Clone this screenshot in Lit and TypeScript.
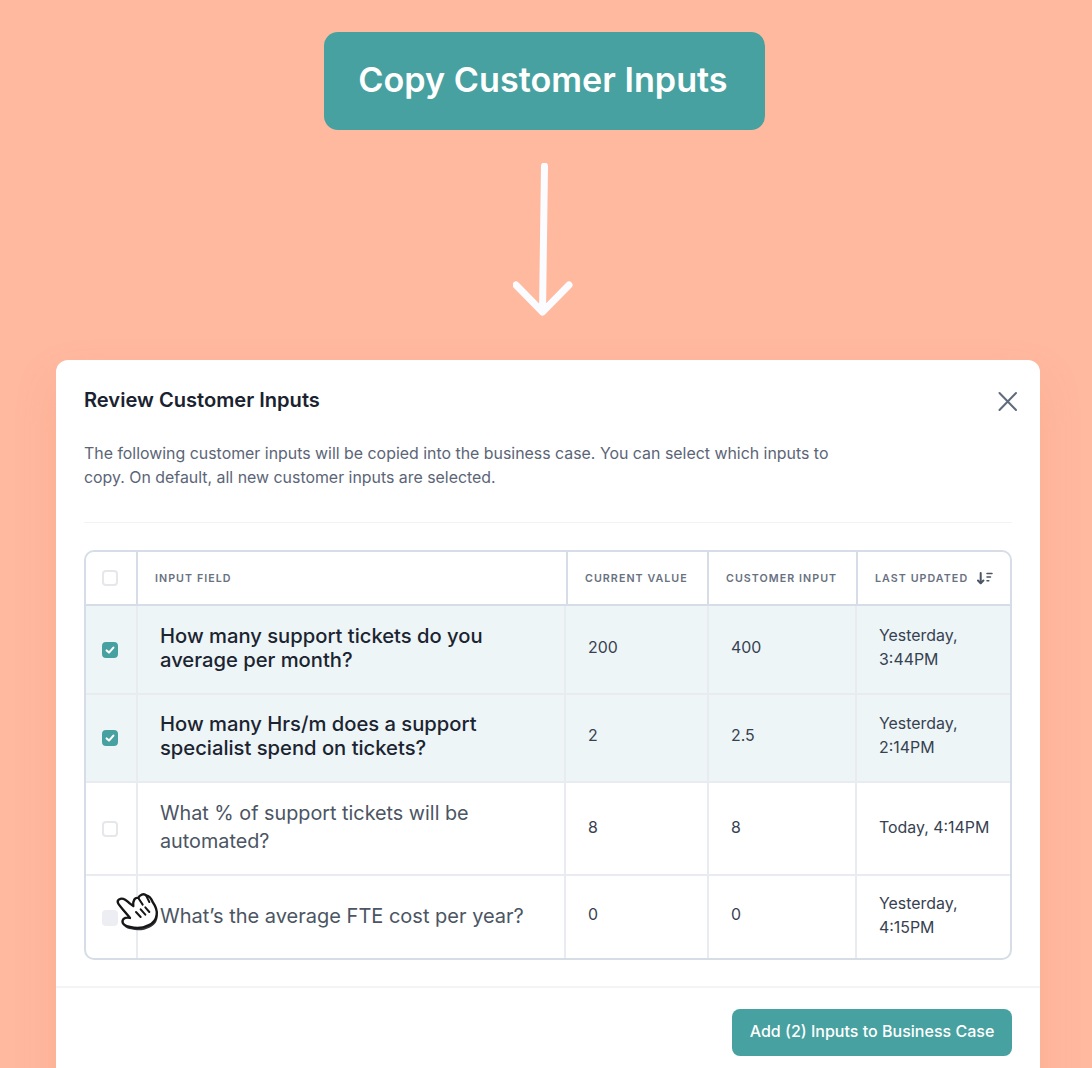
import { LitElement, html, css, svg } from 'lit';
import { customElement } from 'lit/decorators.js';
import { classMap } from 'lit/directives/class-map.js';

interface InputRow {
  question: string;
  current: string;
  customer: string;
  updated: string;
  selected?: boolean;
  tall?: boolean;
  hovered?: boolean;
}

const ROWS: InputRow[] = [
  { question: 'How many support tickets do you average per month?', current: '200', customer: '400', updated: 'Yesterday, 3:44PM', selected: true },
  { question: 'How many Hrs/m does a support specialist spend on tickets?', current: '2', customer: '2.5', updated: 'Yesterday, 2:14PM', selected: true },
  { question: 'What % of support tickets will be automated?', current: '8', customer: '8', updated: 'Today, 4:14PM', tall: true },
  { question: 'What’s the average FTE cost per year?', current: '0', customer: '0', updated: 'Yesterday, 4:15PM', hovered: true },
];

const HAND_OUTLINE =
  'M118 92C125 87 135 90 150 105L160 112C158 95 165 85 175 88C178 78 192 73 198 80C208 82 215 92 218 100C225 110 232 125 230 138C228 155 218 165 205 170C190 178 170 180 150 175C135 172 125 165 128 155C130 148 140 145 150 148C140 135 125 120 115 105C112 100 113 95 118 92Z';

const handCursor = svg`
  <svg class="hand" width="45" height="40" viewBox="105 70 135 120" fill="none">
    <path d=${HAND_OUTLINE} fill="#33363b" transform="translate(3 7)" />
    <path d=${HAND_OUTLINE} fill="#fff" stroke="#161616" stroke-width="7" stroke-linejoin="round" />
    <path d="M175 88L188 108M198 80L208 100M168 130L182 145M182 122L196 138M196 116L208 130"
      stroke="#161616" stroke-width="6" stroke-linecap="round" />
  </svg>
`;

@customElement('app-root')
export class AppRoot extends LitElement {
  static styles = css`
    :host {
      display: block;
      height: 1068px;
      overflow: hidden;
      background: #ffb99f;
      font-family: Inter, 'Liberation Sans', sans-serif;
      color: #111827;
    }

    .top {
      display: flex;
      flex-direction: column;
      align-items: center;
      padding: 32px 3px 0 0;
    }

    .copy-btn {
      width: 441px;
      height: 98px;
      box-sizing: border-box;
      display: flex;
      align-items: center;
      justify-content: center;
      padding: 0 3px 4px 0;
      background: #47a1a0;
      color: #fff;
      border-radius: 14px;
      font-size: 34.2px;
      font-weight: 600;
    }

    .arrow {
      display: block;
      margin: 33px 0 42px;
    }

    .modal {
      margin: 0 52px 0 56px;
      height: 760px;
      background: #fff;
      border-radius: 12px;
      box-shadow: 0 20px 40px rgba(230, 130, 100, 0.22);
      box-sizing: border-box;
      padding-top: 28px;
    }

    .modal-head {
      display: flex;
      justify-content: space-between;
      padding: 0 23px 0 28px;
    }

    h2 {
      margin: 0;
      font-size: 20.1px;
      line-height: 25px;
      font-weight: 600;
      color: #1a2230;
    }

    .close {
      display: block;
      margin-top: 3px;
    }

    .desc {
      margin: 29px 0 0 28px;
      width: 760px;
      font-size: 15.9px;
      line-height: 24px;
      color: #5b6577;
    }

    .rule {
      height: 1px;
      margin: 32px 28px 27px;
      background: #f1f3f7;
    }

    .table {
      margin: 0 28px;
      border: 2px solid #d6dde6;
      border-radius: 10px;
      overflow: hidden;
      height: 410px;
      box-sizing: border-box;
      position: relative;
    }

    .head,
    .row {
      display: grid;
      box-sizing: border-box;
    }

    .head {
      grid-template-columns: 50px 430px 141px 149px 1fr;
      height: 54px;
      border-bottom: 2px solid #d6dde6;
      font-size: 10.7px;
      font-weight: 600;
      letter-spacing: 1.05px;
      color: #68717f;
    }

    .head > div {
      display: flex;
      align-items: center;
      padding-left: 17px;
      border-left: 2px solid #d6dde6;
    }

    .head > div:first-child {
      border-left: 0;
      padding: 0 2px 0 0;
      justify-content: center;
    }

    .sort {
      margin-left: 9px;
    }

    .row {
      grid-template-columns: 50px 428px 143px 148px 1fr;
      height: 88px;
      border-bottom: 2px solid #e8ecf1;
      color: #374151;
    }

    .head + .row {
      height: 89px;
    }

    .row:last-child {
      border-bottom: 0;
    }

    .row.tall {
      height: 93px;
    }

    .row.hovered {
      height: 84px;
    }

    .row.selected {
      background: #edf5f7;
      color: #1b2430;
    }

    .row > div {
      display: flex;
      align-items: center;
      border-left: 2px solid #e8ecf1;
      box-sizing: border-box;
      font-size: 15.9px;
      line-height: 24px;
      padding-left: 22px;
      padding-bottom: 4px;
    }

    .row.tall > div {
      padding-bottom: 2px;
    }

    .row.hovered > div {
      padding-bottom: 5px;
    }

    .row > .check-cell,
    .row.tall > .check-cell,
    .row.hovered > .check-cell {
      border-left: 0;
      padding: 0 2px 0 0;
      justify-content: center;
      position: relative;
    }

    .row > .question {
      font-size: 19.8px;
      line-height: 24px;
      padding-right: 20px;
      color: #4b5563;
    }

    .row.tall > .question {
      line-height: 28px;
      padding-bottom: 4px;
    }

    .row.hovered > .question {
      font-size: 20px;
    }

    .row.hovered > .value {
      padding-bottom: 7px;
    }

    .row.selected > .question {
      font-size: 20.2px;
      font-weight: 500;
      color: #1b2430;
    }

    .row > .value,
    .row > .updated {
      color: #374151;
    }

    .row > .updated {
      padding-right: 20px;
    }

    .box {
      width: 16px;
      height: 16px;
      box-sizing: border-box;
      border-radius: 4px;
      border: 2px solid #e5e7eb;
      background: #fff;
      display: flex;
      align-items: center;
      justify-content: center;
    }

    .box.checked {
      background: #47a1a0;
      border-color: #47a1a0;
    }

    .box.hover {
      background: #eceef3;
      border-color: #eceef3;
    }

    .hand {
      position: absolute;
      left: 29px;
      top: 16px;
    }

    .modal-foot {
      margin-top: 26px;
      border-top: 2px solid #f3f4f8;
      display: flex;
      justify-content: flex-end;
      padding: 21px 28px 0;
    }

    .add-btn {
      width: 280px;
      height: 47px;
      box-sizing: border-box;
      padding-bottom: 3px;
      display: flex;
      align-items: center;
      justify-content: center;
      background: #47a1a0;
      color: #fff;
      border-radius: 8px;
      font-size: 16.05px;
      font-weight: 500;
    }
  `;

  private _checkbox(row?: InputRow) {
    const classes = { box: true, checked: !!row?.selected, hover: !!row?.hovered };
    return html`<span class=${classMap(classes)}>
      ${row?.selected
        ? html`<svg width="10" height="10" viewBox="0 0 10 10" fill="none">
            <path d="M1.6 5.4L4 7.6L8.4 2.6" stroke="#fff" stroke-width="2.1" stroke-linecap="round" stroke-linejoin="round" />
          </svg>`
        : ''}
    </span>`;
  }

  private _row(row: InputRow) {
    const classes = { row: true, selected: !!row.selected, tall: !!row.tall, hovered: !!row.hovered };
    return html`
      <div class=${classMap(classes)}>
        <div class="check-cell">${this._checkbox(row)} ${row.hovered ? handCursor : ''}</div>
        <div class="question">${row.question}</div>
        <div class="value">${row.current}</div>
        <div class="value">${row.customer}</div>
        <div class="updated">${row.updated}</div>
      </div>
    `;
  }

  render() {
    return html`
      <div class="top">
        <div class="copy-btn">Copy Customer Inputs</div>
        <svg class="arrow" width="64" height="155" viewBox="0 0 64 155" fill="none">
          <path d="M31.5 3L29.5 149M3 122L29.5 149L56 122" stroke="#fbfcff" stroke-width="7" stroke-linecap="round" stroke-linejoin="round" />
        </svg>
      </div>

      <div class="modal">
        <div class="modal-head">
          <h2>Review Customer Inputs</h2>
          <svg class="close" width="19" height="20" viewBox="0 0 19 20" fill="none">
            <path d="M1.5 2L18 19M18 2L1.5 19" stroke="#5f6b7c" stroke-width="2" stroke-linecap="round" />
          </svg>
        </div>
        <p class="desc">
          The following customer inputs will be copied into the business case. You can select which inputs to
          copy. On default, all new customer inputs are selected.
        </p>
        <div class="rule"></div>

        <div class="table">
          <div class="head">
            <div>${this._checkbox()}</div>
            <div>INPUT FIELD</div>
            <div>CURRENT VALUE</div>
            <div>CUSTOMER INPUT</div>
            <div>
              LAST UPDATED
              <svg class="sort" width="16" height="13" viewBox="0 0 16 13" fill="none">
                <path d="M3.7 1V11" stroke="#4b5563" stroke-width="2" stroke-linecap="round" />
                <path d="M1 8.5L3.7 11.2L6.4 8.5" stroke="#4b5563" stroke-width="2" stroke-linecap="round" stroke-linejoin="round" />
                <path d="M10 1.5H15M10 5H13.5M10 8.8H11.8" stroke="#4b5563" stroke-width="1.5" stroke-linecap="round" />
              </svg>
            </div>
          </div>
          ${ROWS.map((r) => this._row(r))}
        </div>

        <div class="modal-foot">
          <div class="add-btn">Add (2) Inputs to Business Case</div>
        </div>
      </div>
    `;
  }
}
